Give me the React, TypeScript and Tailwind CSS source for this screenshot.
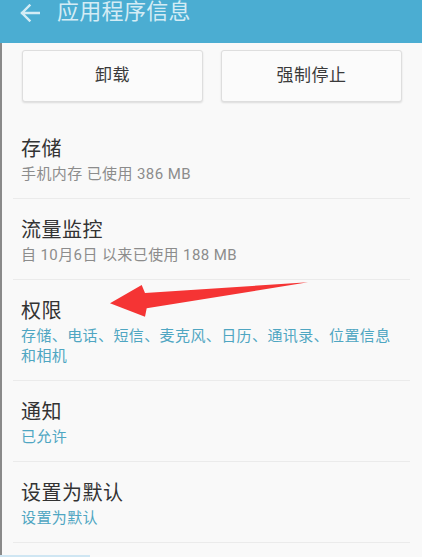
import React from "react";

const font = { fontFamily: 'Roboto, "Noto Sans CJK SC", "Noto Sans", sans-serif' };

function Item({ title, sub, blue }: { title: string; sub: React.ReactNode; blue?: boolean }) {
  return (
    <div>
      <div className="pl-[19px] pr-[12px] pt-[17px] pb-[14px]">
        <div className="text-[20px] leading-[28px] tracking-[0.5px] text-[#333333]">{title}</div>
        <div
          className={`mt-[1px] text-[15px] leading-[20px] tracking-[0.4px] ${blue ? "text-[#4fa6c2]" : "text-[#8c8c8c]"}`}
        >
          {sub}
        </div>
      </div>
      <div className="ml-[11px] mr-[12px] h-px bg-[#ebebeb]" />
    </div>
  );
}

export default function App() {
  return (
    <div className="relative w-[422px] h-[557px] overflow-hidden bg-[#f9f9f9]" style={font}>
      <header className="h-[43px] bg-[#4badd2] flex items-start">
        <div className="flex items-center h-[24px] pl-[20px]">
          <svg width="20" height="18" viewBox="0 0 20 18" className="mt-[1px]">
            <path d="M19 9H2M9.5 1.5L2 9l7.5 7.5" stroke="#d4ecf5" strokeWidth="2.4" fill="none" strokeLinecap="square" />
          </svg>
          <span className="ml-[17px] text-[22px] leading-[24px] text-[#d4ecf5] tracking-[0.3px]">应用程序信息</span>
        </div>
      </header>
      <div className="border-l-2 border-[#8a8a8a] h-[514px]">
        <div className="flex gap-[18px] pl-[20px] pr-[20px] pt-[7px]">
          <button className="w-[181px] h-[52px] bg-[#fbfbfb] border border-[#dedede] rounded-[3px] shadow-[0_1px_2px_rgba(0,0,0,0.12)] text-[17px] tracking-[0.5px] text-[#3a3a3a]">
            卸载
          </button>
          <button className="w-[181px] h-[52px] bg-[#fbfbfb] border border-[#dedede] rounded-[3px] shadow-[0_1px_2px_rgba(0,0,0,0.12)] text-[17px] tracking-[0.5px] text-[#3a3a3a]">
            强制停止
          </button>
        </div>
        <div className="mt-[16px]">
          <Item title="存储" sub="手机内存 已使用 386 MB" />
          <Item title="流量监控" sub="自 10月6日 以来已使用 188 MB" />
          <Item title="权限" blue sub={<>存储、电话、短信、麦克风、日历、通讯录、位置信息<br />和相机</>} />
          <Item title="通知" blue sub="已允许" />
          <Item title="设置为默认" blue sub="设置为默认" />
        </div>
      </div>
      <div className="absolute left-0 bottom-0 w-[90px] h-[2px] bg-[#cfe6f3]" />
      <svg className="absolute left-0 top-0 pointer-events-none" width="422" height="557" viewBox="0 0 422 557">
        <polygon
          points="110,303.3 141.7,285 145,293 308,282.3 146.7,308.3 145,316.7"
          fill="#f53434"
        />
      </svg>
    </div>
  );
}
